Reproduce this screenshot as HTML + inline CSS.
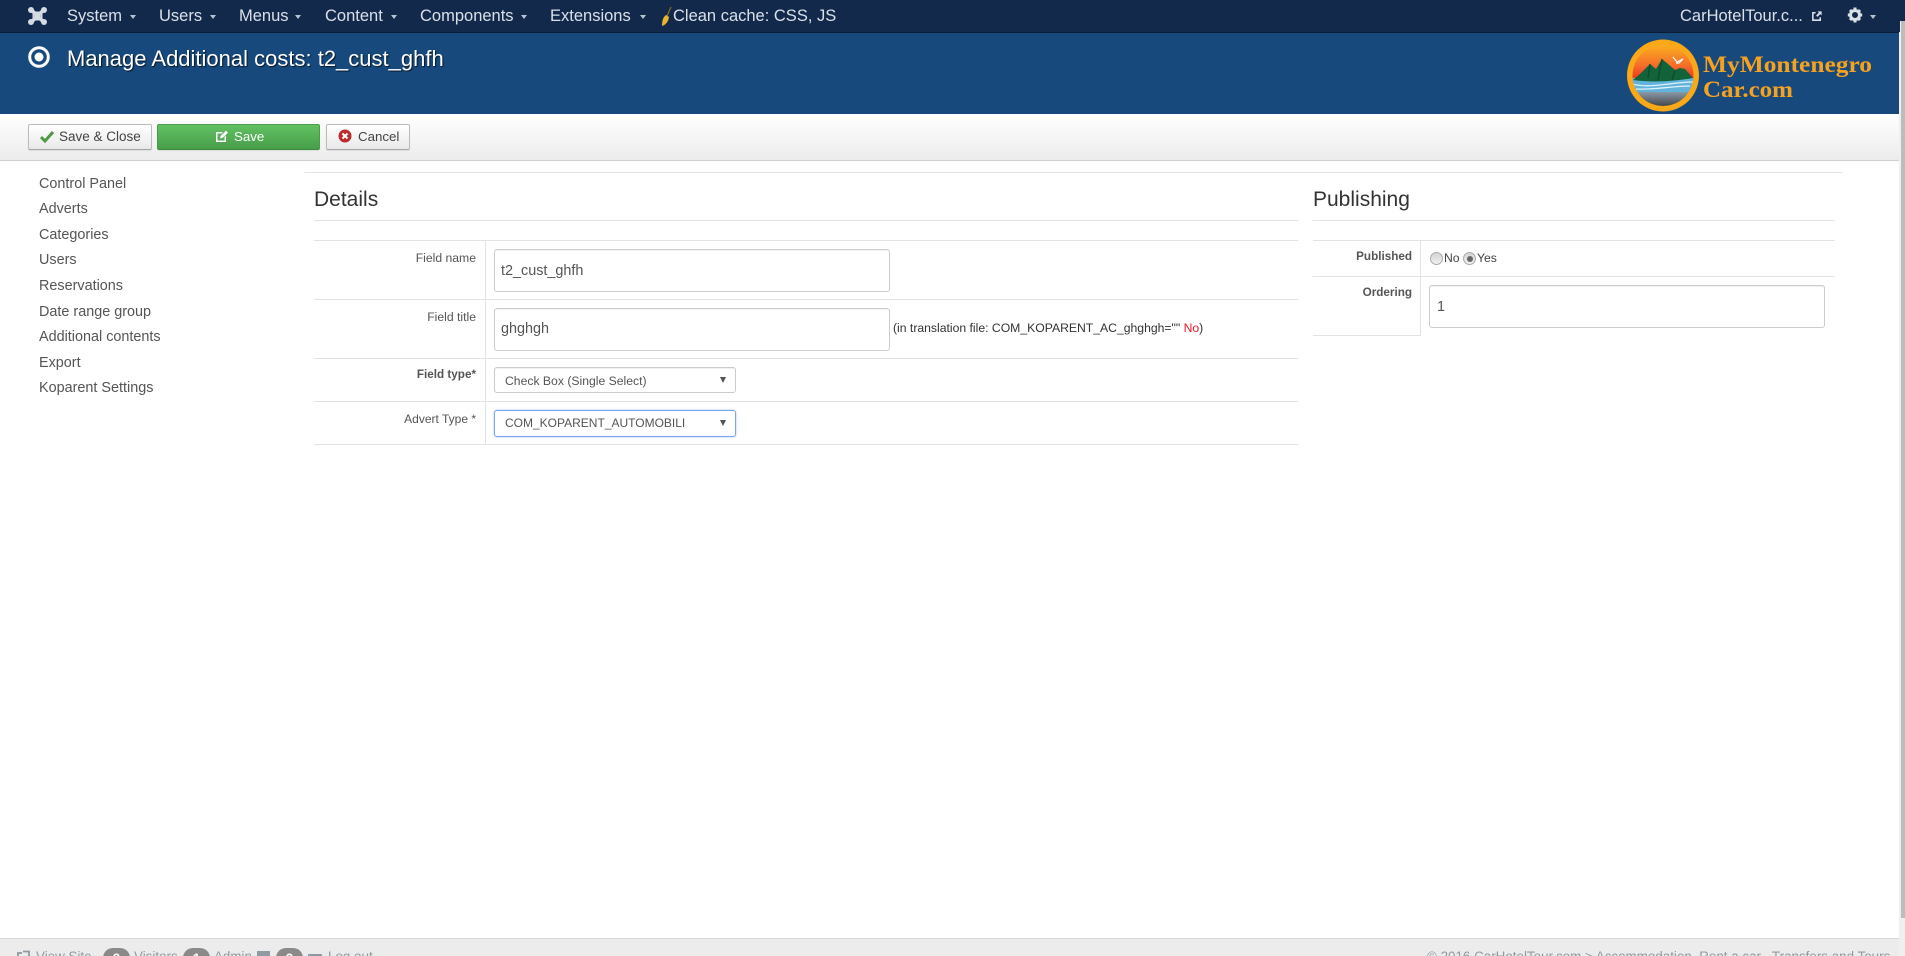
<!DOCTYPE html>
<html><head><meta charset="utf-8"><title>Manage Additional costs</title>
<style>
html,body{margin:0;padding:0;width:1905px;height:956px;overflow:hidden;background:#fff;font-family:"Liberation Sans",Arial,sans-serif}
#p{position:relative;width:1905px;height:956px;overflow:hidden}
.a,.t{position:absolute}
.t{white-space:nowrap}
.n{color:#d9e0e8;font-size:16.5px;top:0;line-height:33px}
.c{position:absolute;top:15px;width:0;height:0;border-left:3.5px solid transparent;border-right:3.5px solid transparent;border-top:4px solid #b9c3cf}
.s{left:39px;font-size:14.4px;color:#555;line-height:20px}
.l{background:#e3e3e3;height:1px}
.lb{font-size:12.2px;color:#555;text-align:right;line-height:16px}
.lbb{font-size:11.7px;font-weight:bold}
.i{border:1px solid #ccc;border-radius:3px;background:#fff;box-sizing:border-box;box-shadow:inset 0 1px 1px rgba(0,0,0,.06);color:#555;font-size:14.4px}
.b{box-sizing:border-box;border:1px solid #bbb;border-bottom-color:#a4a4a4;border-radius:2px;background:linear-gradient(#fff,#e9e9e9);font-size:13.2px;color:#444;top:124px;height:26px;box-shadow:0 1px 1px rgba(0,0,0,.08)}
.f{color:#8f9ba0;font-size:13.4px;top:948px;line-height:17px}
.bd{position:absolute;top:948px;height:20px;border-radius:10px;background:#8a8a8a;color:#fff;font-size:14px;font-weight:bold;text-align:center;line-height:20px}
</style></head><body><div id="p">

<div class="a" style="left:1899px;top:0;width:6px;height:956px;background:#efefef"></div>
<div class="a" style="left:1901px;top:21px;width:4px;height:897px;background:#bcbcbc"></div>
<div class="a" style="left:0;top:0;width:1905px;height:21px;background:#13294b"></div>
<div class="a" style="left:0;top:0;width:1900px;height:32px;background:#13294b"></div>
<div class="a" style="left:0;top:32px;width:1899px;height:1px;background:#0c1c33"></div>
<div class="a" style="left:0;top:33px;width:1899px;height:81px;background:#17497d"></div>
<div class="a" style="left:0;top:114px;width:1899px;height:46px;background:linear-gradient(#fff,#ececec)"></div>
<div class="a" style="left:0;top:160px;width:1899px;height:1px;background:#cfcfcf"></div>

<svg class="a" style="left:27px;top:6px" width="21" height="20" viewBox="0 0 21 20"><g fill="none" stroke="#d5dbe4" stroke-width="3.600" stroke-linecap="round"><path d="M4 3.500 17 16.500"/><path d="M17 3.500 4 16.500"/></g><path d="M6.500 6.500H14.500V13.500H6.500Z" fill="none" stroke="#d5dbe4" stroke-width="2"/><g fill="#d5dbe4"><circle cx="4" cy="4" r="3"/><circle cx="17" cy="4" r="3"/><circle cx="4" cy="16" r="3"/><circle cx="17" cy="16" r="3"/></g></svg>

<span class="t n" style="left:67px">System</span><i class="c" style="left:130px"></i>
<span class="t n" style="left:159px">Users</span><i class="c" style="left:210px"></i>
<span class="t n" style="left:239px">Menus</span><i class="c" style="left:295px"></i>
<span class="t n" style="left:325px">Content</span><i class="c" style="left:391px"></i>
<span class="t n" style="left:420px">Components</span><i class="c" style="left:521px"></i>
<span class="t n" style="left:550px">Extensions</span><i class="c" style="left:640px"></i>
<svg class="a" style="left:659px;top:6px" width="14" height="21" viewBox="0 0 14 21"><path d="M12 1 8 10" stroke="#8a6a2a" stroke-width="1.200"/><path d="M7 9 10 11C9.500 15 7 19 3 20 3 15 4 11 7 9Z" fill="#e8b52c"/></svg>
<span class="t n" style="left:673px">Clean cache: CSS, JS</span>
<span class="t n" style="left:1680px">CarHotelTour.c...</span>
<svg class="a" style="left:1811px;top:10px" width="12" height="12" viewBox="0 0 13 13"><path d="M5 3H2V11H10V8" fill="none" stroke="#d9e0e8" stroke-width="1.700"/><path d="M7 1.500H11.500V6L10 4.500 7 7.500 5.500 6 8.500 3Z" fill="#d9e0e8"/></svg>
<svg class="a" style="left:1847px;top:7px" width="16" height="16" viewBox="0 0 16 16"><circle cx="8" cy="8" r="4.500" fill="none" stroke="#d9e0e8" stroke-width="3"/><g stroke="#d9e0e8" stroke-width="3"><path d="M8 .5V3.500M8 12.500V15.500M.8 8H3.800M12.200 8H15.200M3 3 5 5M11 11 13 13M13 3 11 5M5 11 3 13"/></g></svg>
<i class="c" style="left:1870px"></i>

<svg class="a" style="left:28px;top:46px" width="22" height="22" viewBox="0 0 22 22"><circle cx="11" cy="11" r="9.300" fill="none" stroke="#fff" stroke-width="3"/><circle cx="11" cy="11" r="4.500" fill="#fff"/></svg>
<span class="t" style="left:67px;top:46px;font-size:22px;line-height:26px;color:#fff;text-shadow:1px 1px 1px rgba(0,0,0,.7)">Manage Additional costs: t2_cust_ghfh</span>

<svg class="a" style="left:1620px;top:36px" width="270" height="78" viewBox="0 0 270 78">
<defs><linearGradient id="sk" x1="0" y1="0" x2="0" y2="1"><stop offset="0" stop-color="#fbb11e"/><stop offset=".55" stop-color="#f4702a"/><stop offset="1" stop-color="#e92a22"/></linearGradient><linearGradient id="wa" x1="0" y1="0" x2="0" y2="1"><stop offset="0" stop-color="#8a9aa6"/><stop offset="1" stop-color="#3b3b40"/></linearGradient><clipPath id="cp"><circle cx="43" cy="39.500" r="30.500"/></clipPath></defs>
<circle cx="43" cy="39.500" r="36" fill="#f9a817"/>
<g clip-path="url(#cp)"><rect x="10" y="8" width="66" height="38" fill="url(#sk)"/>
<rect x="10" y="42" width="66" height="15" fill="#62b3dc"/>
<rect x="10" y="56" width="66" height="16" fill="url(#wa)"/>
<path d="M13 44 21 37 30 28 36 33 42 23 48 28 55 34 60 32 65 33 73 42C55 45 35 47 13 44Z" fill="#12633a"/>
<path d="M30 28 28 42M42 23 38 44M55 34 52 44" stroke="#0b4a2a" stroke-width="1.300" fill="none"/>
<path d="M12 48C30 53 52 46 74 46M16 53C35 54 52 50 70 50" stroke="#dff2fa" stroke-width="1.300" fill="none"/></g>
<path d="M53 21 57 26 63 23 59 27 56 27" stroke="#fff" stroke-width="1.200" fill="none"/>
<text x="83" y="36" font-family="Liberation Serif,serif" font-weight="bold" font-size="23" fill="#f6a21e" textLength="169" lengthAdjust="spacingAndGlyphs">MyMontenegro</text>
<text x="83" y="61" font-family="Liberation Serif,serif" font-weight="bold" font-size="23" fill="#f6a21e" textLength="90" lengthAdjust="spacingAndGlyphs">Car.com</text>
</svg>

<div class="a b" style="left:28px;width:124px"></div>
<svg class="a" style="left:40px;top:130px" width="14" height="13" viewBox="0 0 14 13"><path d="M1 7 5 11 13 2" fill="none" stroke="#4d9a42" stroke-width="3"/></svg>
<span class="t" style="left:59px;top:129px;font-size:13.500px;line-height:16px;color:#444">Save &amp; Close</span>
<div class="a b" style="left:157px;width:163px;background:linear-gradient(#62c163,#479e49);border-color:#4a9a4c #4a9a4c #3c8a3e"></div>
<svg class="a" style="left:215px;top:130px" width="14" height="13" viewBox="0 0 14 13"><path d="M1 2H8L6.500 3.500H2.500V10.500H9.500V7L11 5.500V12H1Z" fill="#fff"/><path d="M5 8.500 5.500 6 11 .8 13 2.800 7.500 8Z" fill="#fff"/></svg>
<span class="t" style="left:234px;top:129px;font-size:13.300px;line-height:16px;color:#fff">Save</span>
<div class="a b" style="left:326px;width:84px"></div>
<svg class="a" style="left:338px;top:129px" width="14" height="14" viewBox="0 0 14 14"><circle cx="7" cy="7" r="6.500" fill="#bd2c2c"/><path d="M4.500 4.500 9.500 9.500M9.500 4.500 4.500 9.500" stroke="#fff" stroke-width="2"/></svg>
<span class="t" style="left:358px;top:129px;font-size:13.300px;line-height:16px;color:#444">Cancel</span>

<span class="t s" style="top:174px">Control Panel</span>
<span class="t s" style="top:199px">Adverts</span>
<span class="t s" style="top:225px">Categories</span>
<span class="t s" style="top:250px">Users</span>
<span class="t s" style="top:276px">Reservations</span>
<span class="t s" style="top:302px">Date range group</span>
<span class="t s" style="top:327px">Additional contents</span>
<span class="t s" style="top:353px">Export</span>
<span class="t s" style="top:378px">Koparent Settings</span>

<div class="a l" style="left:305px;top:172px;width:1537px"></div>
<div class="t" style="left:314px;top:187px;font-size:21px;line-height:26px;color:#333">Details</div>
<div class="t" style="left:1313px;top:187px;font-size:21px;line-height:26px;color:#333">Publishing</div>

<div class="a l" style="left:314px;top:220px;width:984px"></div>
<div class="a l" style="left:314px;top:240px;width:984px"></div>
<div class="a l" style="left:314px;top:299px;width:984px"></div>
<div class="a l" style="left:314px;top:358px;width:984px"></div>
<div class="a l" style="left:314px;top:401px;width:984px"></div>
<div class="a l" style="left:314px;top:444px;width:984px"></div>
<div class="a l" style="left:485px;top:240px;width:1px;height:204px"></div>

<div class="t lb" style="right:1429px;top:250px">Field name</div>
<div class="t lb" style="right:1429px;top:309px">Field title</div>
<div class="t lb lbb" style="right:1429px;top:367px">Field type*</div>
<div class="t lb" style="right:1429px;top:411px;font-size:12px">Advert Type *</div>

<div class="a i" style="left:494px;top:249px;width:396px;height:43px;line-height:43px;padding-left:6px">t2_cust_ghfh</div>
<div class="a i" style="left:494px;top:308px;width:396px;height:43px;line-height:41px;padding-left:6px">ghghgh</div>
<span class="t" style="left:893px;top:320px;font-size:12.200px;line-height:16px;color:#333">(in translation file: COM_KOPARENT_AC_ghghgh="" <span style="color:#e8182a">No</span>)</span>

<div class="a i" style="left:494px;top:367px;width:242px;height:26px;line-height:26px;padding-left:10px;font-size:12.200px">Check Box (Single Select)</div>
<div class="a i" style="left:494px;top:410px;width:242px;height:27px;line-height:25px;padding-left:10px;font-size:12px;border-color:#7aa6ea;border-width:1.500px;box-shadow:0 0 2px rgba(90,140,230,.5)">COM_KOPARENT_AUTOMOBILI</div>
<div class="a" style="left:720px;top:377px;width:0;height:0;border-left:3.500px solid transparent;border-right:3.500px solid transparent;border-top:6px solid #555"></div>
<div class="a" style="left:720px;top:420px;width:0;height:0;border-left:3.500px solid transparent;border-right:3.500px solid transparent;border-top:6px solid #555"></div>

<div class="a l" style="left:1313px;top:220px;width:522px"></div>
<div class="a l" style="left:1313px;top:240px;width:522px"></div>
<div class="a l" style="left:1313px;top:276px;width:522px"></div>
<div class="a l" style="left:1313px;top:335px;width:108px"></div>
<div class="a l" style="left:1420px;top:240px;width:1px;height:96px"></div>
<div class="t lb lbb" style="right:493px;top:249px">Published</div>
<div class="t lb lbb" style="right:493px;top:285px">Ordering</div>
<div class="a" style="left:1430px;top:252px;width:13px;height:13px;box-sizing:border-box;border-radius:50%;border:1px solid #aaa;background:linear-gradient(#d4d4d4,#f0f0f0)"></div>
<span class="t" style="left:1444px;top:250px;font-size:12.200px;line-height:16px;color:#444">No</span>
<div class="a" style="left:1463px;top:252px;width:13px;height:13px;box-sizing:border-box;border-radius:50%;border:1px solid #aaa;background:linear-gradient(#d4d4d4,#f0f0f0)"></div>
<div class="a" style="left:1466.500px;top:255.500px;width:6px;height:6px;border-radius:50%;background:#666"></div>
<span class="t" style="left:1477px;top:250px;font-size:12.200px;line-height:16px;color:#444">Yes</span>
<div class="a i" style="left:1429px;top:285px;width:396px;height:43px;line-height:43px;padding-left:7px">1</div>

<div class="a" style="left:0;top:938px;width:1899px;height:18px;background:#ececec;border-top:1px solid #d8d8d8;box-sizing:border-box"></div>
<svg class="a" style="left:16px;top:950px" width="14" height="13" viewBox="0 0 14 13"><path d="M6 3H2V12H11V8" fill="none" stroke="#8f9ba0" stroke-width="1.800"/><path d="M7 1.500H13V6" fill="none" stroke="#8f9ba0" stroke-width="1.800"/></svg>
<span class="t f" style="left:36px">View Site</span>
<div class="bd" style="left:103px;width:27px">0</div><span class="t f" style="left:134px">Visitors</span>
<div class="bd" style="left:183px;width:27px">1</div><span class="t f" style="left:214px">Admin</span>
<div class="a" style="left:257px;top:951px;width:13px;height:10px;background:#8f9ba0"></div>
<div class="bd" style="left:276px;width:27px">0</div>
<div class="a" style="left:308px;top:954px;width:14px;height:4px;background:#8f9ba0"></div>
<span class="t f" style="left:328px">Log out</span>
<span class="t f" style="left:1427px">© 2016 CarHotelTour.com &gt; Accommodation, Rent a car , Transfers and Tours</span>
</div></body></html>
